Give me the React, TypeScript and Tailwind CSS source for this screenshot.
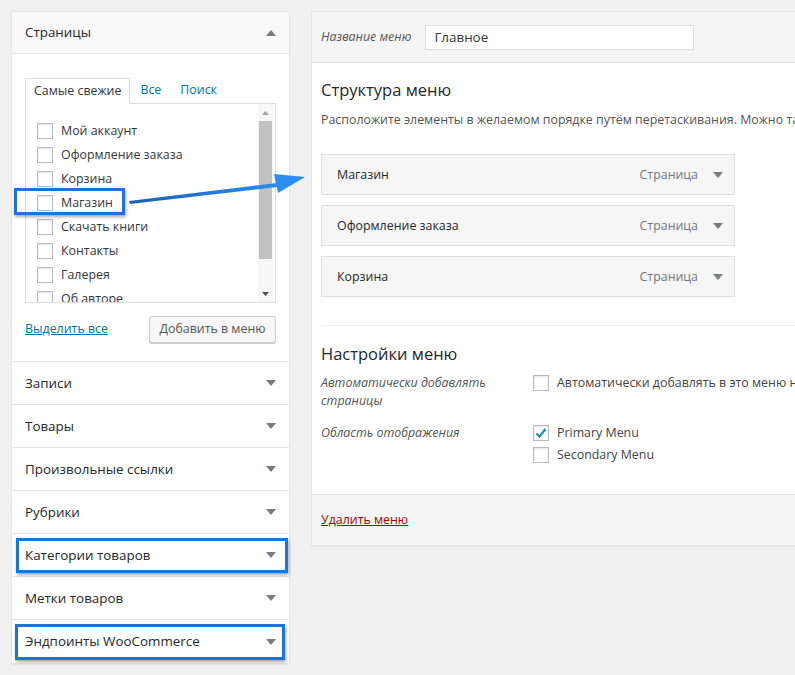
import React from 'react';

const font = { fontFamily: '"Open Sans", "Noto Sans", sans-serif' };

function Caret({ up = false }: { up?: boolean }) {
  return (
    <svg width="10" height="6" viewBox="0 0 10 6" className="shrink-0">
      {up ? <path d="M0 6 L5 0 L10 6 Z" fill="#787c82" /> : <path d="M0 0 L10 0 L5 6 Z" fill="#787c82" />}
    </svg>
  );
}

function Box({ checked = false }: { checked?: boolean }) {
  return (
    <span className="relative w-[16px] h-[16px] shrink-0 border border-[#b4b9be] bg-white shadow-[inset_0_1px_2px_rgba(0,0,0,0.1)]">
      {checked && (
        <svg viewBox="0 0 16 16" className="absolute -left-px -top-px w-[16px] h-[16px]">
          <path d="M3.5 8.5 L6.5 11.5 L12.5 4" stroke="#1e8cbe" strokeWidth="2.2" fill="none" />
        </svg>
      )}
    </span>
  );
}

const pages = ['Мой аккаунт', 'Оформление заказа', 'Корзина', 'Магазин', 'Скачать книги', 'Контакты', 'Галерея', 'Об авторе'];
const sections = ['Записи', 'Товары', 'Произвольные ссылки', 'Рубрики', 'Категории товаров', 'Метки товаров', 'Эндпоинты WooCommerce'];
const items = ['Магазин', 'Оформление заказа', 'Корзина'];

export default function App() {
  return (
    <div className="relative w-[795px] h-[675px] overflow-hidden bg-[#f1f1f1] text-[12.4px] text-[#444]" style={font}>
      <div className="flex gap-[21px] pt-[11px] pl-[11px]">
        {/* left column */}
        <div className="w-[279px] shrink-0 bg-white border border-[#e5e5e5] shadow-[0_1px_1px_rgba(0,0,0,0.04)]">
          <div className="h-[42px] px-[13px] flex items-center justify-between bg-[#f9f9f9] border-b border-[#e5e5e5]">
            <span className="text-[13.4px] text-[#23282d]">Страницы</span>
            <Caret up />
          </div>
          <div className="px-[13px] pt-[24px] pb-[18px] border-b border-[#e5e5e5]">
            <div className="flex items-end h-[25px]">
              <div className="h-[26px] px-[8px] flex items-center border border-b-0 border-[#ddd] bg-white text-[#32373c] relative z-10 -mb-px">Самые свежие</div>
              <span className="ml-[10px] text-[#0073aa] h-[25px] flex items-center">Все</span>
              <span className="ml-[19px] text-[#0073aa] h-[25px] flex items-center">Поиск</span>
            </div>
            <div className="relative h-[200px] border border-[#ddd] bg-white overflow-hidden">
              <div className="pt-[15px] pl-[11px]">
                {pages.map((p) => (
                  <div key={p} className="h-[24px] flex items-center gap-[8px] text-[#32373c]">
                    <Box />
                    <span>{p}</span>
                  </div>
                ))}
              </div>
              <div className="absolute right-[2px] top-0 bottom-0 w-[15px] flex flex-col items-center bg-[#f7f7f7]">
                <div className="h-[17px] flex items-center">
                  <svg width="7" height="4" viewBox="0 0 7 4"><path d="M0 4 L3.5 0 L7 4 Z" fill="#a3a3a3" /></svg>
                </div>
                <div className="w-[13px] h-[138px] bg-[#c1c1c1]" />
                <div className="flex-1" />
                <div className="h-[17px] flex items-center">
                  <svg width="7" height="4" viewBox="0 0 7 4"><path d="M0 0 L7 0 L3.5 4 Z" fill="#505050" /></svg>
                </div>
              </div>
            </div>
            <div className="mt-[13px] flex items-center justify-between">
              <span className="text-[#0073aa] underline">Выделить все</span>
              <button className="h-[27px] w-[127px] border border-[#ccc] rounded-[3px] bg-[#f7f7f7] text-[#555] shadow-[0_1px_0_#ccc]">
                Добавить в меню
              </button>
            </div>
          </div>
          {sections.map((s) => (
            <div key={s} className="h-[43px] px-[13px] flex items-center justify-between border-b border-[#e5e5e5] last:border-b-0">
              <span className="text-[13.4px] text-[#23282d]">{s}</span>
              <Caret />
            </div>
          ))}
        </div>

        {/* right column */}
        <div className="w-[540px] shrink-0 self-start bg-white border border-[#e5e5e5] shadow-[0_1px_1px_rgba(0,0,0,0.04)]">
          <div className="h-[51px] px-[9px] flex items-center gap-[14px] bg-[#f5f5f5] border-b border-[#ddd]">
            <span className="italic text-[#555]">Название меню</span>
            <div className="w-[269px] h-[25px] px-[8px] flex items-center border border-[#ddd] bg-white text-[13.4px] text-[#32373c]">Главное</div>
          </div>
          <div className="px-[9px]">
            <h3 className="mt-[15px] text-[16.5px] text-[#23282d]">Структура меню</h3>
            <p className="mt-[8px] whitespace-nowrap text-[#555]">
              Расположите элементы в желаемом порядке путём перетаскивания. Можно также щёлкнуть на стрелку справа от элемента.
            </p>
            <div className="mt-[25px] flex flex-col gap-[10px] w-[414px]">
              {items.map((it) => (
                <div key={it} className="h-[41px] pl-[15px] pr-[11px] flex items-center border border-[#dfdfdf] bg-[#f6f6f6]">
                  <span className="flex-1 text-[#23282d]">{it}</span>
                  <span className="text-[#72777c]">Страница</span>
                  <span className="ml-[15px]"><Caret /></span>
                </div>
              ))}
            </div>
            <div className="mt-[28px] border-t border-[#eee]" />
            <h3 className="mt-[16px] text-[16.5px] text-[#23282d]">Настройки меню</h3>
            <div className="mt-[7px] flex">
              <div className="w-[212px] shrink-0 italic text-[#555] leading-[18px]">Автоматически добавлять<br />страницы</div>
              <label className="flex items-center gap-[8px] h-[18px] whitespace-nowrap text-[#444]">
                <Box />
                <span>Автоматически добавлять в это меню новые страницы верхнего уровня</span>
              </label>
            </div>
            <div className="mt-[14px] flex pb-[30px]">
              <div className="w-[212px] shrink-0 italic text-[#555] leading-[18px]">Область отображения</div>
              <div className="flex flex-col gap-[4px]">
                <label className="flex items-center gap-[8px] h-[18px]">
                  <Box checked />
                  <span>Primary Menu</span>
                </label>
                <label className="flex items-center gap-[8px] h-[18px]">
                  <Box />
                  <span>Secondary Menu</span>
                </label>
              </div>
            </div>
          </div>
          <div className="h-[51px] px-[9px] flex items-center bg-[#f5f5f5] border-t border-[#ddd]">
            <span className="text-[#a00] underline">Удалить меню</span>
          </div>
        </div>
      </div>

      {/* annotations */}
      <div className="absolute left-[14px] top-[188px] w-[111px] h-[27px] border-[3px] border-[#1c74d4] shadow-[1px_2px_3px_rgba(0,0,0,0.35)] pointer-events-none" />
      <div className="absolute left-[16px] top-[538px] w-[272px] h-[35px] border-[3px] border-[#1c74d4] shadow-[1px_2px_3px_rgba(0,0,0,0.35)] pointer-events-none" />
      <div className="absolute left-[15px] top-[624px] w-[270px] h-[36px] border-[3px] border-[#1c74d4] shadow-[1px_2px_3px_rgba(0,0,0,0.35)] pointer-events-none" />
      <svg className="absolute left-0 top-0 pointer-events-none" width="795" height="675">
        <defs>
          <linearGradient id="ag" x1="0" y1="0" x2="1" y2="0">
            <stop offset="0" stopColor="#1a5fb4" />
            <stop offset="1" stopColor="#2a8ff0" />
          </linearGradient>
        </defs>
        <path d="M129 201 L277 183 L277 187 L130 204 Z" fill="url(#ag)" />
        <path d="M274 174 L305 177 L278 193 Z" fill="#2a8ff0" />
      </svg>
    </div>
  );
}
